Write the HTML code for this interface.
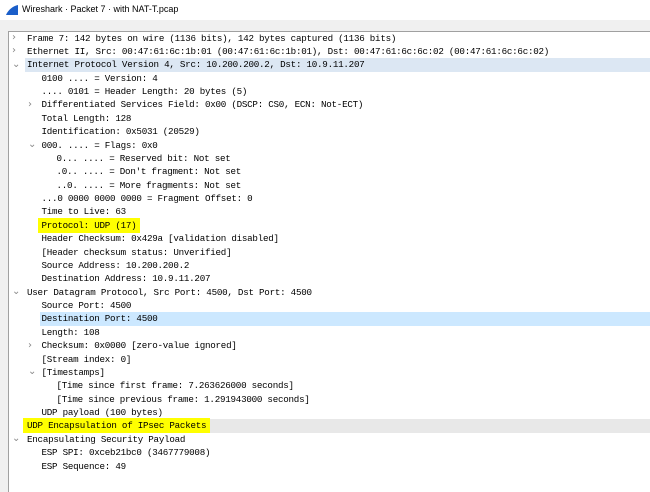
<html><head><style>
body{margin:0;width:650px;height:479px;background:#f0f0f0;position:relative;overflow:hidden;font-family:"Liberation Mono","DejaVu Sans Mono",monospace}
.t{position:absolute;left:0;top:0;width:650px;height:20px;background:#fff}
.t span{position:absolute;left:22px;top:4px;font:9px "Liberation Sans",sans-serif;color:#000}
.p{position:absolute;left:8px;top:31px;width:650px;height:460px;background:#fff;border-left:1px solid #a0a0a0;border-top:1px solid #a0a0a0}
.r{position:absolute;height:13.375px;line-height:13.375px;font-size:9.2px;letter-spacing:-0.24px;color:#000;white-space:pre;right:0}
.a{position:absolute;font-size:10px;color:#888;font-family:"DejaVu Sans",sans-serif}
.y{background:#ffff00;padding:2px 4px;margin-left:-4px}
</style></head><body>
<div class="t"><svg style="position:absolute;left:5px;top:4px" width="14" height="12"><path d="M1 11 L13 11 L13 1 C8 2 3 6 1 11Z" fill="#1a5ec9"/></svg><span>Wireshark · Packet 7 · with NAT-T.pcap</span></div>
<div class="p"></div>
<div id="c"></div>
<script>
var rows=[
[0,'>','Frame 7: 142 bytes on wire (1136 bits), 142 bytes captured (1136 bits)'],
[0,'>','Ethernet II, Src: 00:47:61:6c:1b:01 (00:47:61:6c:1b:01), Dst: 00:47:61:6c:6c:02 (00:47:61:6c:6c:02)'],
[0,'v','Internet Protocol Version 4, Src: 10.200.200.2, Dst: 10.9.11.207','#dce7f3'],
[1,'','0100 .... = Version: 4'],
[1,'','.... 0101 = Header Length: 20 bytes (5)'],
[1,'>','Differentiated Services Field: 0x00 (DSCP: CS0, ECN: Not-ECT)'],
[1,'','Total Length: 128'],
[1,'','Identification: 0x5031 (20529)'],
[1,'v','000. .... = Flags: 0x0'],
[2,'','0... .... = Reserved bit: Not set'],
[2,'','.0.. .... = Don\'t fragment: Not set'],
[2,'','..0. .... = More fragments: Not set'],
[1,'','...0 0000 0000 0000 = Fragment Offset: 0'],
[1,'','Time to Live: 63'],
[1,'','<span class="y">Protocol: UDP (17)</span>'],
[1,'','Header Checksum: 0x429a [validation disabled]'],
[1,'','[Header checksum status: Unverified]'],
[1,'','Source Address: 10.200.200.2'],
[1,'','Destination Address: 10.9.11.207'],
[0,'v','User Datagram Protocol, Src Port: 4500, Dst Port: 4500'],
[1,'','Source Port: 4500'],
[1,'','Destination Port: 4500','#cce8ff'],
[1,'','Length: 108'],
[1,'>','Checksum: 0x0000 [zero-value ignored]'],
[1,'','[Stream index: 0]'],
[1,'v','[Timestamps]'],
[2,'','[Time since first frame: 7.263626000 seconds]'],
[2,'','[Time since previous frame: 1.291943000 seconds]'],
[1,'','UDP payload (100 bytes)'],
[0,'','<span class="y">UDP Encapsulation of IPsec Packets</span>','#e8e8e8'],
[0,'v','Encapsulating Security Payload'],
[1,'','ESP SPI: 0xceb21bc0 (3467779008)'],
[1,'','ESP Sequence: 49']];
var X=[27,41.5,56.5],A=[12,28,43],h='';
rows.forEach(function(r,i){var top=31.6+i*13.375;
h+='<div class="r" style="top:'+top+'px;left:'+(X[r[0]]-2)+'px;padding-left:2px;'+(r[3]?'background:'+r[3]:'')+'">'+r[2]+'</div>';
if(r[1])h+='<div class="a" style="top:'+(top+0.5)+'px;left:'+A[r[0]]+'px">'+(r[1]=='>'?'›':'⌄')+'</div>';});
document.getElementById('c').innerHTML=h;
</script>
</body></html>
